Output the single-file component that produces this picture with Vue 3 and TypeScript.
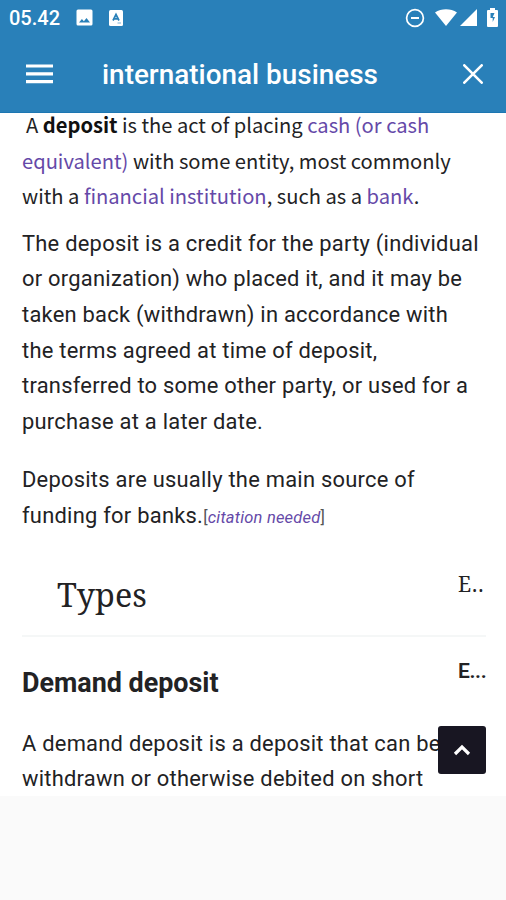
<script setup lang="ts">
const title: string = 'international business'
const time: string = '05.42'
</script>

<template>
  <div class="screen">
    <header class="header">
      <div class="status">
        <span class="time">{{ time }}</span>
        <svg class="image-icon" width="17" height="17" viewBox="0 0 17 17">
          <path fill-rule="evenodd" fill="#fff" d="M2 .5h13a1.500 1.500 0 0 1 1.500 1.500v13a1.500 1.500 0 0 1-1.500 1.500H2A1.500 1.500 0 0 1 .5 15V2A1.500 1.500 0 0 1 2 .5ZM3 13.500h11l-3.500-4.500-2.600 3.300-2-2.300Z" />
        </svg>
        <svg class="letter-icon" width="14" height="16" viewBox="0 0 14 16">
          <rect width="14" height="16" rx="1.500" fill="#fff" />
          <path d="M4 10.500 7 4.500l3 6M5 8.800h4" fill="none" stroke="#2980b9" stroke-width="1.700" />
          <path d="M8.500 13h3.500" stroke="#a9cbe3" stroke-width="1.500" />
        </svg>
        <span class="spacer"></span>
        <svg class="dnd" width="20" height="20" viewBox="0 0 20 20" fill="none" stroke="#fff">
          <circle cx="10" cy="10" r="8.400" stroke-width="1.700" />
          <path d="M6 10h8" stroke-width="2" />
        </svg>
        <svg class="wifi" width="22" height="17" viewBox="0 0 22 17">
          <path fill="#fff" d="M0 3.500C6.400-.9 15.600-.9 22 3.500L11 17Z" />
        </svg>
        <svg class="signal" width="17" height="17" viewBox="0 0 17 17">
          <path fill="#fff" d="M17 0v17H0Z" />
        </svg>
        <svg class="battery" width="11" height="19" viewBox="0 0 11 19">
          <path fill="#fff" d="M3 0h5v2h2q1 0 1 1v15q0 1-1 1H1q-1 0-1-1V3q0-1 1-1h2Z" />
          <path fill="#2980b9" d="M7.500 5H3.500v5h2.200v4L8 9H5.800Z" />
        </svg>
      </div>
      <nav class="bar">
        <svg class="menu" width="27" height="20" viewBox="0 0 27 20">
          <path d="M0 2h27M0 9.800h27M0 17.600h27" stroke="#fff" stroke-width="3.200" />
        </svg>
        <h1>{{ title }}</h1>
        <svg class="close" width="20" height="20" viewBox="0 0 20 20">
          <path d="m1.300 1.300 17.400 17.400m0-17.400L1.300 18.700" stroke="#fff" stroke-width="2.600" stroke-linecap="round" />
        </svg>
      </nav>
    </header>
    <main class="article">
      <p class="lead">
        <span class="first">A <b>deposit</b> is the act of placing <a>cash (or cash</a></span><br>
        <a>equivalent)</a> with some entity, most commonly<br>
        with a <a>financial institution</a>, such as a <a>bank</a>.
      </p>
      <p class="credit">
        The deposit is a credit for the party (individual<br>
        or organization) who placed it, and it may be<br>
        taken back (withdrawn) in accordance with<br>
        the terms agreed at time of deposit,<br>
        transferred to some other party, or used for a<br>
        purchase at a later date.
      </p>
      <p class="source">
        Deposits are usually the main source of<br>
        funding for banks.<span class="note">[<a>citation needed</a>]</span>
      </p>
      <div class="types">
        <h2>Types</h2>
        <span class="edit">E..</span>
      </div>
      <div class="demand">
        <h3>Demand deposit</h3>
        <span class="edit">E...</span>
      </div>
      <p class="last">
        A demand deposit is a deposit that can be<br>
        withdrawn or otherwise debited on short
      </p>
    </main>
    <button class="top" aria-label="Scroll to top">
      <svg width="18" height="12" viewBox="0 0 18 12">
        <path d="m2 10 7-7 7 7" fill="none" stroke="#fff" stroke-width="3.200" />
      </svg>
    </button>
  </div>
</template>

<style>
body {
  margin: 0;
  background: #fafafa;
}
</style>

<style scoped>
.screen {
  position: relative;
  width: 506px;
  height: 900px;
  overflow: hidden;
  background: #fafafa;
  color: #222224;
  font-family: Roboto, sans-serif;
}
.header {
  box-sizing: border-box;
  height: 113px;
  background: #2980b9;
  border-bottom: 1px solid #1c76b2;
  color: #fff;
}
.status {
  display: flex;
  align-items: center;
  height: 35px;
  padding: 0 8px 0 9px;
}
.time {
  width: 67px;
  font-size: 20px;
  font-weight: 500;
}
.letter-icon { margin-left: 16px; }
.spacer { flex: 1; }
.dnd { margin-right: 1px; }
.wifi { margin-left: 9px; }
.signal { margin-left: 3px; }
.battery { margin-left: 10px; }
.bar {
  display: flex;
  align-items: center;
  height: 78px;
  padding: 0 23px 0 26px;
}
h1 {
  flex: 1;
  margin: 2px 0 0 49px;
  font-size: 27.900px;
  line-height: 32px;
  font-weight: 500;
  white-space: nowrap;
}
.close { margin-top: -1px; }
.article {
  display: flow-root;
  box-sizing: border-box;
  height: 683px;
  padding: 0 20px 0 22px;
  background: #fff;
}
p {
  margin: 0;
  font-size: 21.900px;
  letter-spacing: 0.250px;
  line-height: 35.600px;
  white-space: nowrap;
}
a { color: #6549a8; }
.lead {
  margin-top: -6px;
  font-family: "Noto Sans CJK SC", sans-serif;
  font-size: 20.150px;
  letter-spacing: 0;
}
b { color: #111; }
.first { margin-left: 4px; }
.credit { margin-top: 12px; }
.source { margin-top: 23px; }
.note {
  font-size: 16.500px;
  letter-spacing: 0.200px;
  color: #555;
}
.note a { font-style: italic; }
.types {
  display: flex;
  justify-content: space-between;
  box-sizing: border-box;
  height: 101px;
  padding: 36px 0 0 35px;
  border-bottom: 2px solid #f5f7f7;
  font-family: "Noto Serif", "Liberation Serif", serif;
}
h2 {
  margin: -1px 0 0;
  font-size: 32.300px;
  line-height: 46px;
  font-weight: 400;
}
.edit {
  width: 28px;
  font-size: 21px;
  line-height: 25px;
  white-space: nowrap;
}
.types .edit { letter-spacing: 0.900px; }
.demand {
  display: flex;
  justify-content: space-between;
  height: 89px;
}
.demand .edit {
  margin-top: 22px;
  font-weight: 600;
  letter-spacing: -0.350px;
}
h3 {
  margin: 29px 0 0;
  font-size: 26.900px;
  line-height: 34px;
  font-weight: 700;
}
.top {
  position: absolute;
  left: 438px;
  top: 726px;
  display: flex;
  align-items: center;
  justify-content: center;
  width: 48px;
  height: 48px;
  padding: 0;
  border: 0;
  border-radius: 3px;
  background: #181622;
}
</style>
